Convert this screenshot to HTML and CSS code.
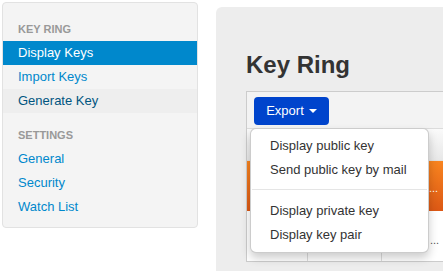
FILE: index.html
```html
<!DOCTYPE html>
<html>
<head>
<meta charset="utf-8">
<link rel="stylesheet" href="styles.css">
</head>
<body>
<div class="page">
  <aside class="sidebar">
    <div class="nav-header">Key Ring</div>
    <a class="nav-item active">Display Keys</a>
    <a class="nav-item">Import Keys</a>
    <a class="nav-item hover">Generate Key</a>
    <div class="nav-header second">Settings</div>
    <a class="nav-item">General</a>
    <a class="nav-item">Security</a>
    <a class="nav-item">Watch List</a>
  </aside>
  <main class="content">
    <h1 class="title">Key Ring</h1>
    <div class="table">
      <div class="toolbar">
        <button class="btn">Export <span class="caret"></span></button>
      </div>
      <div class="thead"></div>
      <div class="row orange"><span class="cell"></span><span class="cell"></span><span class="cell dots-w">...</span></div>
      <div class="row plain"><span class="cell"></span><span class="cell"></span><span class="cell dots">...</span></div>
      <ul class="dropdown">
        <li>Display public key</li>
        <li>Send public key by mail</li>
        <li class="divider"></li>
        <li>Display private key</li>
        <li>Display key pair</li>
      </ul>
    </div>
  </main>
</div>
</body>
</html>
```

FILE: styles.css
```css
html, body {
  margin: 0;
  padding: 0;
  overflow: hidden;
  background: #fff;
  font-family: "Liberation Sans", Arial, sans-serif;
  font-size: 13px;
}
.page {
  display: flex;
  align-items: flex-start;
  padding: 2px 0 0 2px;
  gap: 18px;
}
.sidebar {
  width: 194px;
  flex: none;
  background: #f4f4f4;
  border: 1px solid #e2e2e2;
  border-radius: 4px;
  padding: 16px 0 8px;
  display: flex;
  flex-direction: column;
}
.nav-header {
  font-size: 11px;
  font-weight: bold;
  color: #999;
  text-transform: uppercase;
  line-height: 20px;
  padding: 0 15px 2px;
}
.nav-header.second {
  margin-top: 12px;
}
.nav-item {
  display: block;
  line-height: 20px;
  padding: 2px 15px;
  color: #0088cc;
  text-decoration: none;
}
.nav-item.active {
  background: #0088cc;
  color: #fff;
}
.nav-item.hover {
  background: #eeeeee;
  color: #005580;
}
.content {
  flex: 1;
  min-width: 0;
  height: 220px;
  margin-top: 5px;
  background: #ededed;
  border-radius: 6px 0 0 0;
  padding: 44px 0 0 30px;
  overflow: hidden;
}
.title {
  margin: 0 0 12px;
  font-size: 24px;
  line-height: 28px;
  font-weight: bold;
  color: #333;
}
.table {
  position: relative;
  width: 240px;
  border: 1px solid #cccccc;
  background: #fff;
}
.toolbar {
  height: 37px;
  box-sizing: border-box;
  padding: 5px 7px 0;
  background: #f3f3f3;
  border-bottom: 1px solid #dcdcdc;
}
.btn {
  display: flex;
  align-items: center;
  gap: 5px;
  height: 28px;
  width: 75px;
  justify-content: center;
  padding: 0 0 1px 0;
  border: 0;
  border-radius: 4px;
  background: #0044cc;
  color: #fff;
  font-family: inherit;
  font-size: 13px;
}
.caret {
  width: 0;
  height: 0;
  border-left: 4px solid transparent;
  border-right: 4px solid transparent;
  border-top: 4px solid #fff;
}
.thead {
  height: 31px;
  background: linear-gradient(#fafafa, #e8e8e8);
  border-bottom: 1px solid #e0e0e0;
}
.row {
  display: grid;
  grid-template-columns: 60px 74px 1fr;
  height: 50px;
}
.row.orange {
  background: linear-gradient(#f8841f, #dc5815);
}
.cell + .cell {
  border-left: 1px solid #dddddd;
}
.row.orange .cell + .cell {
  border-left: 0;
}
.cell {
  display: flex;
  align-items: center;
  padding-left: 48px;
}
.dots-w {
  color: #fff;
  font-size: 11px;
  padding-top: 4px;
}
.dots {
  color: #555;
  font-size: 11px;
  padding-top: 8px;
}
.dropdown {
  position: absolute;
  left: 3px;
  top: 36px;
  width: 179px;
  box-sizing: border-box;
  margin: 0;
  padding: 5px 0;
  list-style: none;
  background: #fff;
  border: 1px solid rgba(0, 0, 0, 0.2);
  border-radius: 6px;
  box-shadow: 0 5px 10px rgba(0, 0, 0, 0.2);
}
.dropdown li {
  line-height: 20px;
  padding: 2px 19px;
  color: #333;
  white-space: nowrap;
}
.dropdown li.divider {
  height: 1px;
  padding: 0;
  margin: 7px 1px 9px;
  background: #e5e5e5;
}
```
